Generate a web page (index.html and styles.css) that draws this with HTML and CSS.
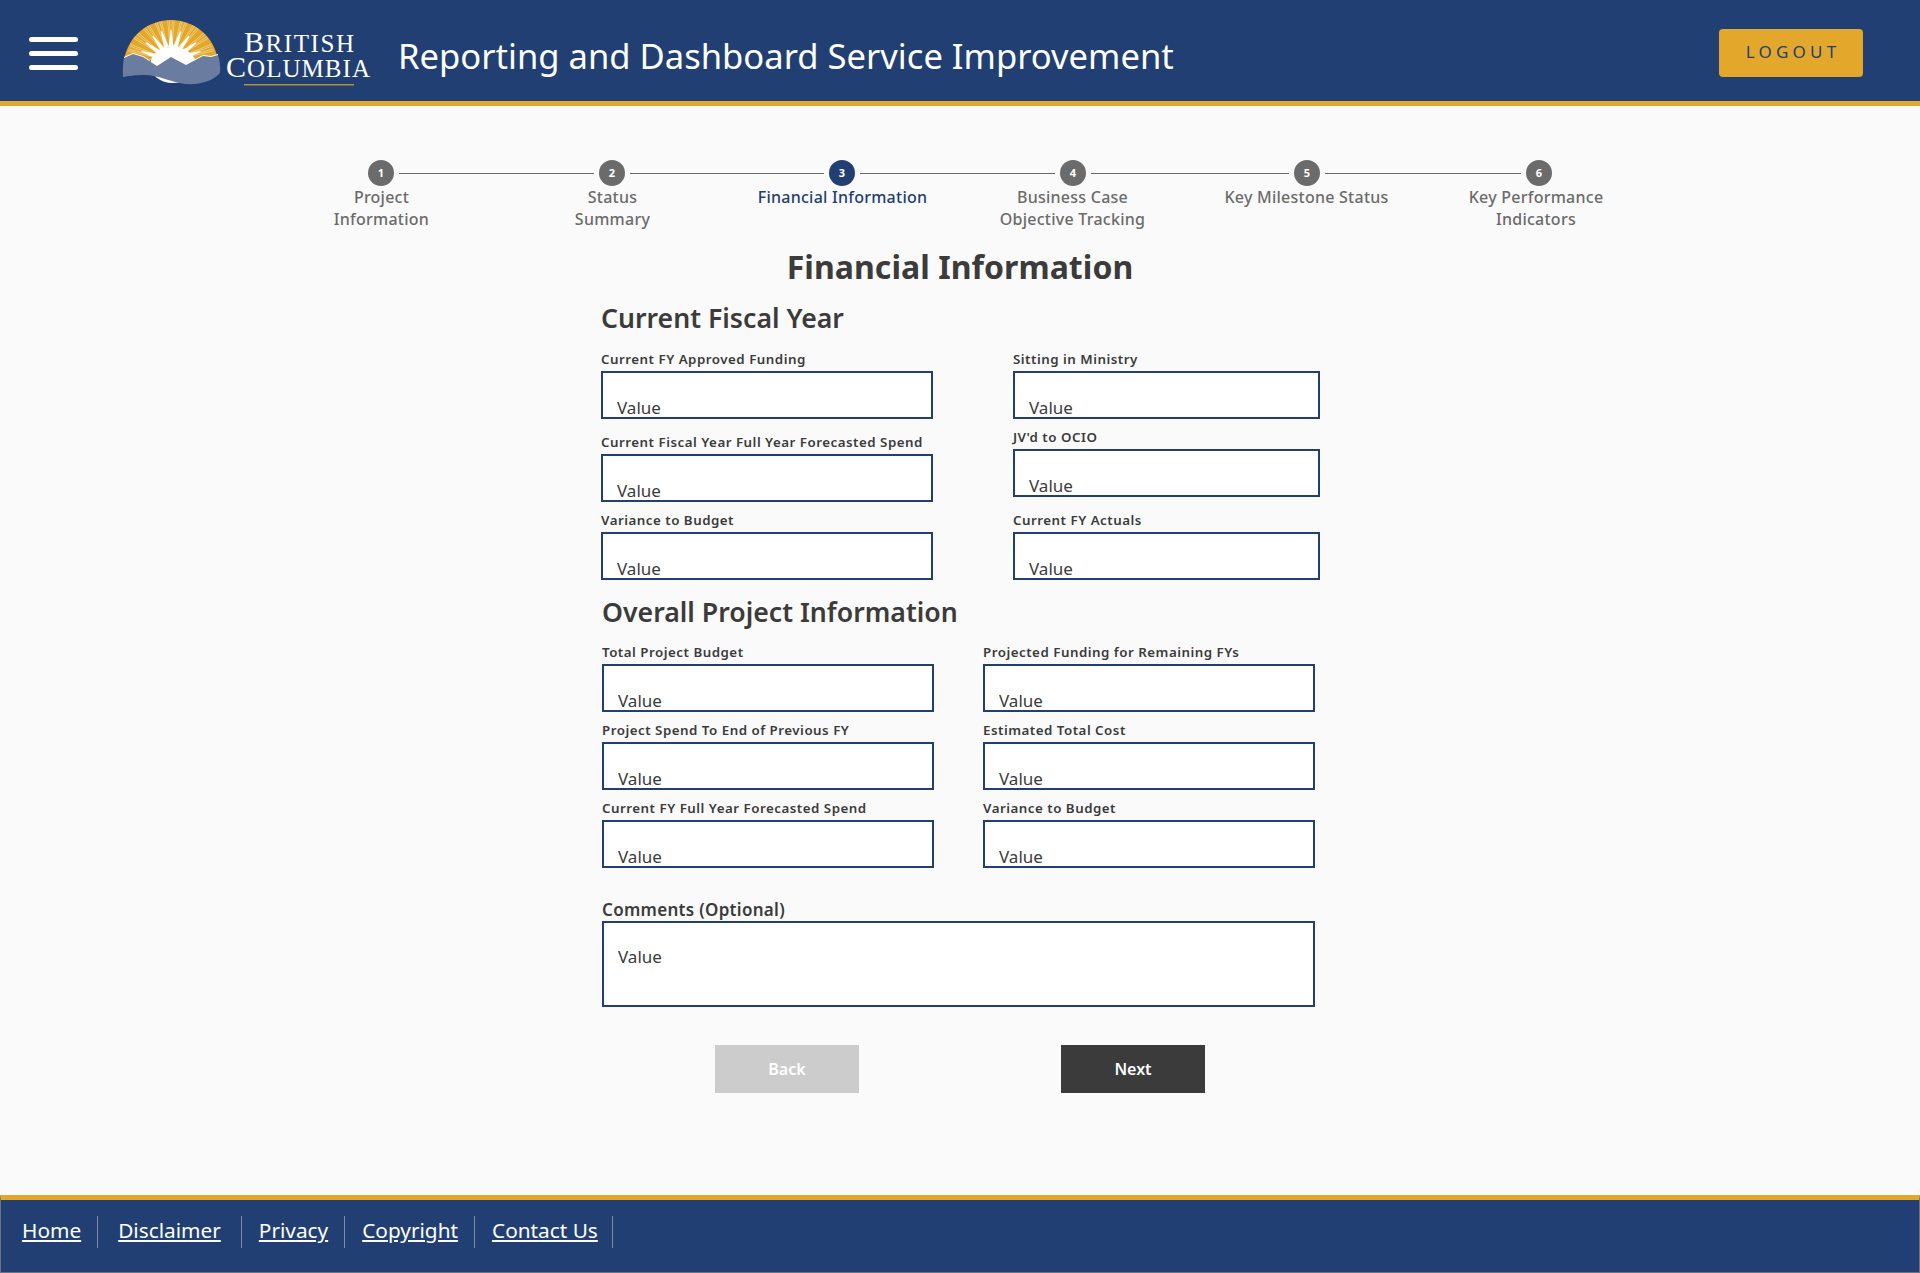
FILE: index.html
```html
<!DOCTYPE html>
<html lang="en">
<head>
  <meta charset="UTF-8">
  <meta name="viewport" content="width=device-width, initial-scale=1.0">
  <title>Reporting and Dashboard Service Improvement</title>
  <link rel="stylesheet" href="styles.css">
</head>
<body>

  <header class="site-header">
    <button class="menu-button" type="button" aria-label="Menu">
      <span></span><span></span><span></span>
    </button>
    <svg class="logo" width="252" height="70" viewBox="0 0 252 70" role="img" aria-label="British Columbia">
      <defs>
        <clipPath id="dome"><path d="M4 43 C8 19 28 3 51 3 C74 3 94 19 98 43 Z"/></clipPath>
        <g id="ray">
          <path d="M48.5 30 L53.5 30 L51.5 13 L50.5 13 Z" fill="#fff"/>
          <path d="M49.5 24 L47.5 0 M50.3 24 L49.5 0 M51.7 24 L52.5 0 M52.5 24 L54.5 0" stroke="#fff" stroke-width="0.6" opacity="0.6"/>
        </g>
      </defs>
      <path d="M4 43 C8 19 28 3 51 3 C74 3 94 19 98 43 Z" fill="#e3a82b"/>
      <g clip-path="url(#dome)">
        <use href="#ray"/>
        <use href="#ray" transform="rotate(-18 51 44)"/>
        <use href="#ray" transform="rotate(18 51 44)"/>
        <use href="#ray" transform="rotate(-36 51 44)"/>
        <use href="#ray" transform="rotate(36 51 44)"/>
        <use href="#ray" transform="rotate(-54 51 44)"/>
        <use href="#ray" transform="rotate(54 51 44)"/>
        <use href="#ray" transform="rotate(-72 51 44)"/>
        <use href="#ray" transform="rotate(72 51 44)"/>
      </g>
      <ellipse cx="53" cy="48" rx="23" ry="18" fill="#fff"/>
      <path d="M4 40 L13 36 L23 39 L37 48 L51 39 L66 47 L83 38 L91 39 L98 37 L98 44 L4 44 Z" fill="#fff"/>
      <path d="M4 41 L13 37 L23 40 L37 49 L51 40 L66 48 L83 39 L91 40 L98 38 C100 44 100.5 50 100 56 C93 64 80 68 65 67 C50 65 38 58 25 58 C15 58 8 59 3 60 C2.5 52 3 46 4 41 Z" fill="#6a7da1"/>
      <text class="logo-word" x="124" y="35" textLength="110" lengthAdjust="spacing"><tspan class="logo-cap">B</tspan>RITISH</text>
      <text class="logo-word" x="106" y="60" textLength="144" lengthAdjust="spacing"><tspan class="logo-cap">C</tspan>OLUMBIA</text>
      <rect x="124" y="67" width="110" height="1.5" fill="#b48f37"/>
    </svg>
    <h1 class="site-title">Reporting and Dashboard Service Improvement</h1>
    <a class="logout" href="#">LOGOUT</a>
  </header>

  <main class="page">
    <div class="steps">
      <div class="step-track">
        <span class="dot">1</span><span class="bar"></span>
        <span class="dot">2</span><span class="bar"></span>
        <span class="dot dot-active">3</span><span class="bar"></span>
        <span class="dot">4</span><span class="bar"></span>
        <span class="dot">5</span><span class="bar"></span>
        <span class="dot">6</span>
      </div>
      <ol class="step-labels">
        <li>Project<br>Information</li>
        <li>Status<br>Summary</li>
        <li class="step-active">Financial Information</li>
        <li>Business Case<br>Objective Tracking</li>
        <li>Key Milestone Status</li>
        <li>Key Performance<br>Indicators</li>
      </ol>
    </div>

    <h2 class="page-title">Financial Information</h2>

    <form class="finance-form">
      <section class="group">
        <h3 class="group-title">Current Fiscal Year</h3>
        <div class="columns columns-current">
          <div class="column">
            <label class="field"><span>Current FY Approved Funding</span><input type="text" value="Value"></label>
            <label class="field field-spaced"><span>Current Fiscal Year Full Year Forecasted Spend</span><input type="text" value="Value"></label>
            <label class="field"><span>Variance to Budget</span><input type="text" value="Value"></label>
          </div>
          <div class="column">
            <label class="field"><span>Sitting in Ministry</span><input type="text" value="Value"></label>
            <label class="field"><span>JV'd to OCIO</span><input type="text" value="Value"></label>
            <label class="field field-spaced"><span>Current FY Actuals</span><input type="text" value="Value"></label>
          </div>
        </div>
      </section>

      <section class="group group-overall">
        <h3 class="group-title">Overall Project Information</h3>
        <div class="columns columns-overall">
          <div class="column">
            <label class="field"><span>Total Project Budget</span><input type="text" value="Value"></label>
            <label class="field"><span>Project Spend To End of Previous FY</span><input type="text" value="Value"></label>
            <label class="field"><span>Current FY Full Year Forecasted Spend</span><input type="text" value="Value"></label>
          </div>
          <div class="column">
            <label class="field"><span>Projected Funding for Remaining FYs</span><input type="text" value="Value"></label>
            <label class="field"><span>Estimated Total Cost</span><input type="text" value="Value"></label>
            <label class="field"><span>Variance to Budget</span><input type="text" value="Value"></label>
          </div>
        </div>

        <label class="comments">
          <span>Comments (Optional)</span>
          <textarea rows="2">Value</textarea>
        </label>
      </section>

      <div class="actions">
        <button class="btn btn-back" type="button">Back</button>
        <button class="btn btn-next" type="submit">Next</button>
      </div>
    </form>
  </main>

  <footer class="site-footer">
    <nav class="footer-links">
      <a href="#">Home</a>
      <a href="#">Disclaimer</a>
      <a href="#">Privacy</a>
      <a href="#">Copyright</a>
      <a href="#">Contact Us</a>
    </nav>
  </footer>

</body>
</html>
```

FILE: styles.css
```css
* {
  box-sizing: border-box;
}

html, body {
  height: 100%;
}

body {
  display: flex;
  flex-direction: column;
  margin: 0;
  background-color: #fafafa;
  color: #3b3b3b;
  font-family: "Noto Sans", Arial, sans-serif;
}

/* header */
.site-header {
  display: flex;
  align-items: center;
  height: 106px;
  padding: 0 57px 0 29px;
  background-color: #223f73;
  border-bottom: 5px solid #e3a82b;
}

.menu-button {
  display: flex;
  flex-direction: column;
  gap: 9px;
  width: 49px;
  margin-top: 6px;
  padding: 0;
  background: none;
  border: 0;
}

.menu-button span {
  height: 5px;
  background-color: #fff;
  border-radius: 3px;
}

.logo {
  flex: none;
  margin: 3px 0 0 42px;
}

.logo-word {
  fill: #fff;
  font-family: "Liberation Serif", serif;
  font-size: 25px;
}

.logo-cap {
  font-size: 30px;
}

.site-title {
  flex: 1;
  margin: 10px 0 0 26px;
  color: #fff;
  font-size: 34.6px;
  font-weight: 400;
}

.logout {
  width: 144px;
  height: 48px;
  margin-top: 5px;
  padding-left: 4px;
  background-color: #e3a82b;
  border-radius: 4px;
  color: #223f73;
  font-size: 17px;
  letter-spacing: 4.2px;
  line-height: 46px;
  text-align: center;
  text-decoration: none;
}

/* stepper */
.page {
  flex: 1;
}

.steps {
  width: 1390px;
  margin: 54px 0 0 266px;
}

.step-track {
  display: flex;
  align-items: center;
  gap: 5px;
  padding: 0 0 0 102px;
}

.dot {
  flex: none;
  width: 26px;
  height: 26px;
  background-color: #6b6b6b;
  border-radius: 50%;
  color: #fff;
  font-size: 11px;
  font-weight: 700;
  line-height: 26px;
  text-align: center;
}

.dot-active {
  background-color: #223f73;
}

.bar {
  flex: none;
  width: 195px;
  height: 1px;
  background-color: #6b6b6b;
}

.bar:nth-child(4) {
  width: 194px;
}

.bar:nth-child(8) {
  width: 198px;
}

.bar:nth-child(10) {
  width: 196px;
}

.step-labels {
  display: grid;
  grid-template-columns: 231px 231px 229px 231px 237px 222px;
  margin: 0;
  padding: 0;
  color: #6b6b6b;
  font-size: 16px;
  font-weight: 500;
  letter-spacing: 0.25px;
  line-height: 22px;
  list-style: none;
  text-align: center;
}

.step-active {
  color: #223f73;
}

.page-title {
  margin: 15px 0 0;
  font-size: 32px;
  font-weight: 700;
  letter-spacing: 0.05px;
  line-height: 44px;
  text-align: center;
}

/* form */
.finance-form {
  width: 720px;
  margin: 11px 0 0 601px;
}

.group-title {
  margin: 0;
  font-size: 26.67px;
  font-weight: 600;
  line-height: 36px;
}

.columns {
  display: flex;
  margin-top: 5px;
}

.columns-current {
  gap: 80px;
}

.columns-current .column:last-child {
  width: 307px;
}

.columns-overall {
  gap: 49px;
  margin-top: 4px;
}

.column {
  display: flex;
  flex-direction: column;
  width: 332px;
}

.field {
  display: block;
}

.field-spaced {
  margin-top: 5px;
}

.field span {
  display: block;
  height: 30px;
  padding-top: 9px;
  color: #3b3b3b;
  font-size: 13.33px;
  font-weight: 600;
  letter-spacing: 0.5px;
  line-height: 18px;
}

.field input {
  display: block;
  width: 100%;
  height: 48px;
  padding: 25px 14px 0;
  background-color: #fff;
  border: 2px solid #223f73;
  border-radius: 0;
  color: #3b3b3b;
  font-family: inherit;
  font-size: 17px;
}

.group-overall {
  margin: 14px 0 0 1px;
}

.comments {
  display: block;
  margin-top: 31px;
}

.comments span {
  display: block;
  font-size: 17px;
  font-weight: 600;
  letter-spacing: 0.3px;
  line-height: 22px;
}

.comments textarea {
  display: block;
  width: 713px;
  height: 86px;
  padding: 22px 14px 0;
  background-color: #fff;
  border: 2px solid #223f73;
  border-radius: 0;
  color: #3b3b3b;
  font-family: inherit;
  font-size: 17px;
  resize: none;
}

.actions {
  display: flex;
  gap: 202px;
  margin: 38px 0 0 114px;
}

.btn {
  width: 144px;
  height: 48px;
  border: 0;
  color: #fff;
  font-family: inherit;
  font-size: 16px;
  font-weight: 600;
}

.btn-back {
  background-color: #ccc;
}

.btn-next {
  background-color: #3b3b3b;
}

/* footer */
.site-footer {
  height: 78px;
  padding-top: 16px;
  background-color: #223f73;
  border: 1px solid #6b7280;
  border-top: 5px solid #e3a82b;
}

.footer-links {
  display: flex;
  height: 32px;
}

.footer-links a {
  padding: 0 16px 0 17px;
  border-right: 1px solid #7d8aa3;
  color: #fff;
  font-size: 20.8px;
  line-height: 28px;
}

.footer-links a:first-child {
  padding-left: 21px;
}

.footer-links a:nth-child(2) {
  padding: 0 20px;
}

.footer-links a:last-child {
  padding-right: 14px;
}
```
